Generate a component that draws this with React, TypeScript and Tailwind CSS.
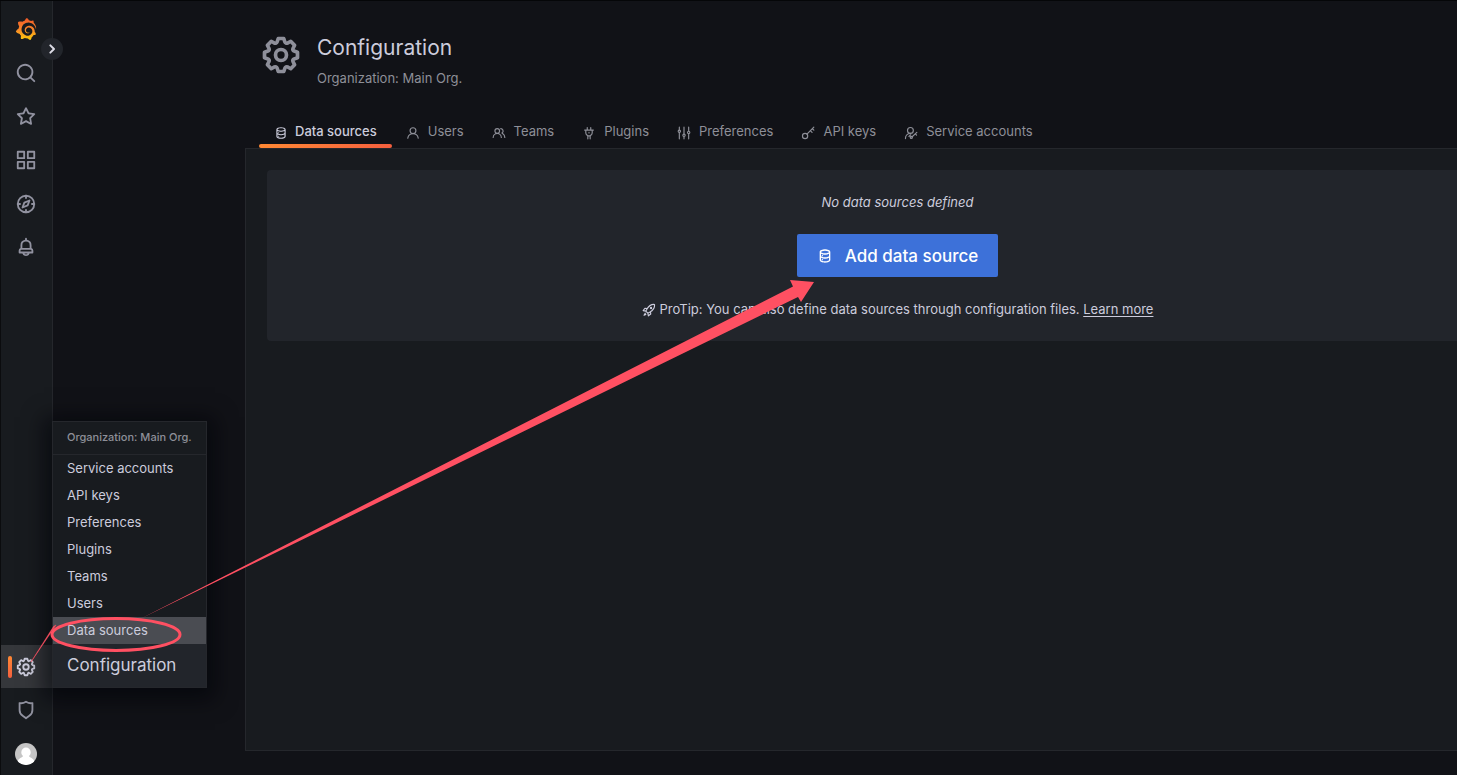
import React from "react";
import { SiGrafana } from "react-icons/si";

const PATHS = {
  search:
    "M21.71,20.29,18,16.61A9,9,0,1,0,16.61,18l3.68,3.68a1,1,0,0,0,1.42,0A1,1,0,0,0,21.71,20.29ZM11,18a7,7,0,1,1,7-7A7,7,0,0,1,11,18Z",
  star: "M22,9.67A1,1,0,0,0,21.14,9l-5.69-.83L12.9,3a1,1,0,0,0-1.8,0L8.55,8.16,2.86,9a1,1,0,0,0-.81.68,1,1,0,0,0,.25,1l4.13,4-1,5.68A1,1,0,0,0,6.9,21.44L12,18.77l5.1,2.67a.93.93,0,0,0,.46.12,1,1,0,0,0,.59-.19,1,1,0,0,0,.4-1l-1-5.68,4.13-4A1,1,0,0,0,22,9.67Zm-6.15,4a1,1,0,0,0-.29.88l.72,4.2-3.76-2a1.06,1.06,0,0,0-.94,0l-3.76,2,.72-4.2a1,1,0,0,0-.29-.88l-3-3,4.21-.61a1,1,0,0,0,.76-.55L12,5.7l1.88,3.82a1,1,0,0,0,.76.55l4.21.61Z",
  apps: "M10,13H3a1,1,0,0,0-1,1v7a1,1,0,0,0,1,1h7a1,1,0,0,0,1-1V14A1,1,0,0,0,10,13ZM9,20H4V15H9ZM21,2H14a1,1,0,0,0-1,1v7a1,1,0,0,0,1,1h7a1,1,0,0,0,1-1V3A1,1,0,0,0,21,2ZM20,9H15V4h5Zm1,4H14a1,1,0,0,0-1,1v7a1,1,0,0,0,1,1h7a1,1,0,0,0,1-1V14A1,1,0,0,0,21,13Zm-1,7H15V15h5ZM10,2H3A1,1,0,0,0,2,3v7a1,1,0,0,0,1,1h7a1,1,0,0,0,1-1V3A1,1,0,0,0,10,2ZM9,9H4V4H9Z",
  bell: "M18,13.18V10a6,6,0,0,0-5-5.91V3a1,1,0,0,0-2,0V4.09A6,6,0,0,0,6,10v3.18A3,3,0,0,0,4,16v2a1,1,0,0,0,1,1H8.14a4,4,0,0,0,7.72,0H19a1,1,0,0,0,1-1V16A3,3,0,0,0,18,13.18ZM8,10a4,4,0,0,1,8,0v3H8Zm4,10a2,2,0,0,1-1.72-1h3.44A2,2,0,0,1,12,20Zm6-3H6V16a1,1,0,0,1,1-1H17a1,1,0,0,1,1,1Z",
  cog: "M21.32,9.55l-1.89-.63.89-1.78A1,1,0,0,0,20.13,6L18,3.87a1,1,0,0,0-1.15-.19l-1.78.89-.63-1.89A1,1,0,0,0,13.5,2h-3a1,1,0,0,0-.95.68L8.92,4.57,7.14,3.68A1,1,0,0,0,6,3.87L3.87,6a1,1,0,0,0-.19,1.15l.89,1.78-1.89.63A1,1,0,0,0,2,10.5v3a1,1,0,0,0,.68.95l1.89.63-.89,1.78A1,1,0,0,0,3.87,18L6,20.13a1,1,0,0,0,1.15.19l1.78-.89.63,1.89a1,1,0,0,0,.95.68h3a1,1,0,0,0,.95-.68l.63-1.89,1.78.89A1,1,0,0,0,18,20.13L20.13,18a1,1,0,0,0,.19-1.15l-.89-1.78,1.89-.63A1,1,0,0,0,22,13.5v-3A1,1,0,0,0,21.32,9.55ZM20,12.78l-1.2.4A2,2,0,0,0,17.64,16l.57,1.14-1.1,1.1L16,17.64a2,2,0,0,0-2.79,1.16l-.4,1.2H11.22l-.4-1.2A2,2,0,0,0,8,17.64l-1.14.57-1.1-1.1L6.36,16A2,2,0,0,0,5.2,13.18L4,12.78V11.22l1.2-.4A2,2,0,0,0,6.36,8L5.79,6.89l1.1-1.1L8,6.36A2,2,0,0,0,10.82,5.2l.4-1.2h1.56l.4,1.2A2,2,0,0,0,16,6.36l1.14-.57,1.1,1.1L17.64,8a2,2,0,0,0,1.16,2.79l1.2.4ZM12,8a4,4,0,1,0,4,4A4,4,0,0,0,12,8Zm0,6a2,2,0,1,1,2-2A2,2,0,0,1,12,14Z",
  shield:
    "M19.63,3.65a1,1,0,0,0-.84-.2,8,8,0,0,1-6.22-1.27,1,1,0,0,0-1.14,0A8,8,0,0,1,5.21,3.45a1,1,0,0,0-.84.2A1,1,0,0,0,4,4.43v7.45a9,9,0,0,0,3.77,7.33l3.65,2.6a1,1,0,0,0,1.16,0l3.65-2.6A9,9,0,0,0,20,11.88V4.43A1,1,0,0,0,19.63,3.65ZM18,11.88a7,7,0,0,1-2.93,5.7L12,19.77,8.93,17.58A7,7,0,0,1,6,11.88V5.58a10,10,0,0,0,6-1.39,10,10,0,0,0,6,1.39Z",
  database:
    "M8,16.5a1,1,0,1,0,1,1A1,1,0,0,0,8,16.5ZM12,2C8,2,4,3.37,4,6V18c0,2.63,4,4,8,4s8-1.37,8-4V6C20,3.37,16,2,12,2Zm6,16c0,.71-2.28,2-6,2s-6-1.29-6-2V14.73A13.16,13.16,0,0,0,12,16a13.16,13.16,0,0,0,6-1.27Zm0-6c0,.71-2.28,2-6,2s-6-1.29-6-2V8.73A13.16,13.16,0,0,0,12,10a13.16,13.16,0,0,0,6-1.27ZM12,8C8.28,8,6,6.71,6,6s2.28-2,6-2,6,1.29,6,2S15.72,8,12,8ZM8,10.5a1,1,0,1,0,1,1A1,1,0,0,0,8,10.5Z",
  user: "M15.71,12.71a6,6,0,1,0-7.42,0,10,10,0,0,0-6.22,8.18,1,1,0,0,0,2,.22,8,8,0,0,1,15.9,0,1,1,0,0,0,1,.89h.11a1,1,0,0,0,.88-1.1A10,10,0,0,0,15.71,12.71ZM12,12a4,4,0,1,1,4-4A4,4,0,0,1,12,12Z",
  users:
    "M12.3,12.22A4.92,4.92,0,0,0,14,8.5a5,5,0,0,0-10,0,4.92,4.92,0,0,0,1.7,3.72A8,8,0,0,0,1,19.5a1,1,0,0,0,2,0,6,6,0,0,1,12,0,1,1,0,0,0,2,0A8,8,0,0,0,12.3,12.22ZM9,11.5a3,3,0,1,1,3-3A3,3,0,0,1,9,11.5Zm9.74.32A5,5,0,0,0,15,3.5a1,1,0,0,0,0,2,3,3,0,0,1,3,3,3,3,0,0,1-1.5,2.59,1,1,0,0,0-.5.84,1,1,0,0,0,.45.86l.39.26.13.07a7,7,0,0,1,4,6.38,1,1,0,0,0,2,0A9,9,0,0,0,18.74,11.82Z",
};

const STROKES: Record<string, React.ReactNode> = {
  compass: (
    <>
      <circle cx="12" cy="12" r="9" />
      <path d="M12 3v2.5M12 18.5V21M3 12h2.5M18.5 12H21M15.8 8.2l-2 5.3-5.6 2.3 2-5.3z" />
    </>
  ),
  plug: <path d="M9 2.5V7M15 2.5V7M4.5 7h15M6.5 7v5a5 5 0 0 0 3.5 4.5V22M17.5 7v5a5 5 0 0 1-3.5 4.5V22M10 17h4M12 11v1" />,
  sliders: (
    <>
      <path d="M4 2v5M4 11v11M12 2v12M12 18v4M20 2v7M20 13v9" />
      <circle cx="4" cy="9" r="2" />
      <circle cx="12" cy="16" r="2" />
      <circle cx="20" cy="11" r="2" />
    </>
  ),
  key: (
    <>
      <circle cx="7" cy="17" r="4.5" />
      <path d="M10.2 13.8 22 2M16 8l3 3M19.5 4.5 22 7" />
    </>
  ),
  account: (
    <>
      <circle cx="11" cy="7.5" r="5" />
      <path d="M2.5 21.5c0-5 3.5-9 8.5-9M8.500 18l3-3M22 11l-8 7.500M19.500 13.500l2 2" />
      <circle cx="12.500" cy="19.500" r="1.800" />
    </>
  ),
  rocket: (
    <>
      <path d="M21.500 2.500c-5-.5-9.500 1.500-13.500 8.500L6.500 14l3.500 3.500 3-1.500c7-4 9-8.500 8.500-13.500zM9 9.500 5 9l-3 4 4.500 1M14.500 15l.5 4-4 3-1-4.500M5.500 17.500l-2 3.500 3-1.500" />
      <circle cx="15.500" cy="8.500" r="1" />
    </>
  ),
};

function Icon({ name, className }: { name: string; className: string }) {
  const path = PATHS[name as keyof typeof PATHS];
  return (
    <svg viewBox="0 0 24 24" aria-hidden="true" className={className}>
      {path ? (
        <path d={path} fill="currentColor" />
      ) : (
        <g fill="none" stroke="currentColor" strokeWidth="2" strokeLinecap="round" strokeLinejoin="round">
          {STROKES[name]}
        </g>
      )}
    </svg>
  );
}

const TABS = [
  { label: "Users", icon: "user" },
  { label: "Teams", icon: "users" },
  { label: "Plugins", icon: "plug" },
  { label: "Preferences", icon: "sliders" },
  { label: "API keys", icon: "key" },
  { label: "Service accounts", icon: "account" },
];

const NAV = [
  { label: "Search", icon: "search" },
  { label: "Starred", icon: "star" },
  { label: "Dashboards", icon: "apps" },
  { label: "Explore", icon: "compass" },
  { label: "Alerting", icon: "bell" },
];

const MENU = ["Service accounts", "API keys", "Preferences", "Plugins", "Teams", "Users"];

function Sidebar() {
  return (
    <nav className="relative flex w-[53px] shrink-0 flex-col border-l border-r border-l-[#0b0c0e] border-r-[#25272c] bg-[#181b1f] pt-1.5 text-[#9192a0]">
      <div className="flex h-[262px] flex-col">
        <a href="#home" aria-label="Home" className="flex flex-1 items-center justify-center pr-0.5">
          <svg width="0" height="0" className="absolute" aria-hidden="true">
            <linearGradient id="logo" x1="0" y1="0" x2="0" y2="1">
              <stop offset="0" stopColor="#f05a28" />
              <stop offset="0.5" stopColor="#f9842a" />
              <stop offset="1" stopColor="#fbca0a" />
            </linearGradient>
          </svg>
          <SiGrafana className="size-[22px]" fill="url(#logo)" />
        </a>
        {NAV.map((item) => (
          <a key={item.label} href={"#" + item.icon} aria-label={item.label} className="flex flex-1 items-center justify-center pr-0.5">
            <Icon name={item.icon} className="size-[22px]" />
          </a>
        ))}
      </div>
      <button
        aria-label="Expand menu"
        className="absolute top-[37px] -right-[11px] z-10 flex size-[22px] items-center justify-center rounded-full bg-[#22252b] text-[#dcdce6]"
      >
        <svg viewBox="0 0 24 24" className="size-4" fill="none" stroke="currentColor" strokeWidth="3" strokeLinecap="round" strokeLinejoin="round">
          <path d="M9.500 6.500 15 12l-5.500 5.500" />
        </svg>
      </button>
      <div className="mt-auto">
        <div className="relative">
          <a href="#configuration" aria-label="Configuration" className="relative flex h-[43px] items-center justify-center bg-[#35373b] pr-0.5 text-[#ccccdc]">
            <span className="absolute left-[7px] h-[22px] w-1 rounded-sm bg-linear-to-b from-[#ff8833] to-[#f55f3e]" />
            <Icon name="cog" className="size-[22px]" />
          </a>
          <FlyoutMenu />
        </div>
        <a href="#admin" aria-label="Server admin" className="flex h-[44px] items-center justify-center pr-0.5">
          <Icon name="shield" className="size-[22px]" />
        </a>
        <a href="#profile" aria-label="Profile" className="flex h-[43px] items-center justify-center pr-0.5">
          <svg viewBox="0 0 22 22" className="size-[22px]" aria-hidden="true">
            <clipPath id="avatar">
              <circle cx="11" cy="11" r="11" />
            </clipPath>
            <g clipPath="url(#avatar)">
              <rect width="22" height="22" fill="#c5c5c5" />
              <path d="M11 4.500a4.700 4.700 0 0 1 4.700 4.800c0 1.700-.7 2.800-1.700 3.700 0 1.500 5 2 5.500 6L17 22H5l-2.500-3c.5-4 5.500-4.500 5.500-6-1-.9-1.700-2-1.700-3.700A4.700 4.700 0 0 1 11 4.500z" fill="#fff" />
            </g>
          </svg>
        </a>
      </div>
    </nav>
  );
}

function FlyoutMenu() {
  return (
    <div className="absolute bottom-0 left-[51px] z-10 w-[155px] border border-[#25272c] bg-[#181b1f] text-[13px] text-[#ccccdc] shadow-[0_4px_20px_8px_rgba(1,4,9,0.6)]">
      <div className="h-[33px] border-b border-[#25272c] pl-3.5 text-[11px] leading-[30px] font-medium whitespace-nowrap text-[#8e8f98]">
        Organization: Main Org.
      </div>
      {MENU.map((label) => (
        <a key={label} href="#menu" className="block pl-3.5 leading-[27px]">
          {label}
        </a>
      ))}
      <a href="#data-sources" className="block bg-[#4a4c52] pl-3.5 leading-[27px]">
        Data sources
      </a>
      <a href="#configuration" className="block bg-[#22252b] pl-3.5 text-[17px] leading-[43px]">
        Configuration
      </a>
    </div>
  );
}

function PageHeader() {
  return (
    <header className="ml-3.5 flex gap-3.5 pt-8">
      <Icon name="cog" className="size-[44px] text-[#8e8f9a]" />
      <div className="pt-px">
        <h1 className="text-[21px] leading-7 text-[#ccccdc]">Configuration</h1>
        <p className="mt-1.5 text-[13px] leading-5 text-[#8e8f98]">Organization: Main Org.</p>
      </div>
    </header>
  );
}

function Tabs() {
  return (
    <div role="tablist" className="ml-3.5 flex h-[33px] text-[13px] text-[#8e8f98]">
      <a href="#data-sources" role="tab" aria-selected="true" className="relative flex items-start gap-[7px] px-[15px] leading-[32px] font-medium text-[#ccccdc]">
        <Icon name="database" className="mt-[11px] size-[14px]" />
        Data sources
        <span className="absolute inset-x-0 bottom-0 h-1 rounded-sm bg-linear-to-r from-[#ff8833] to-[#f55f3e]" />
      </a>
      {TABS.map((tab) => (
        <a key={tab.label} href={"#" + tab.icon} role="tab" aria-selected="false" className="flex items-start gap-2 px-[14px] leading-[32px]">
          <Icon name={tab.icon} className="mt-[11px] size-[14px]" />
          {tab.label}
        </a>
      ))}
    </div>
  );
}

function EmptyState() {
  return (
    <section className="flex flex-col items-center rounded-l-sm bg-[#22252b] pt-[22px] pb-[22px] pl-[71px] text-[13px] leading-5 text-[#ccccdc]">
      <p className="italic">No data sources defined</p>
      <button className="mt-[22px] flex h-[43px] items-center gap-3 rounded-xs bg-[#3d71d9] px-5 text-[17px] font-medium text-white">
        <Icon name="database" className="size-4" />
        Add data source
      </button>
      <p className="mt-[22px] flex items-center">
        <Icon name="rocket" className="mt-0.5 mr-1 size-[14px]" />
        <span>
          ProTip: You can also define data sources through configuration files.{" "}
          <a href="#learn" className="underline underline-offset-2">
            Learn more
          </a>
        </span>
      </p>
    </section>
  );
}

function Annotations() {
  return (
    <svg className="pointer-events-none absolute -top-px left-0 z-20 h-[775px] w-[1457px] max-w-none" viewBox="0 0 1457 775" aria-hidden="true">
      <path d="M140 619 793 286.500 790 280 814 282 801 302 798 297z" fill="#ff5062" />
      <ellipse cx="116" cy="634.500" rx="64" ry="16" fill="none" stroke="#ff5062" strokeWidth="3" />
      <path d="M31 662 53.500 626.500 56 625z" fill="#ff5062" stroke="#ff5062" strokeWidth="0.500" />
    </svg>
  );
}

export default function App() {
  return (
    <div className="relative flex min-h-screen overflow-hidden border-t border-[#050608] bg-[#111217] font-['Inter',sans-serif]">
      <Sidebar />
      <main className="ml-[192px] flex min-w-0 flex-1 flex-col pb-6">
        <PageHeader />
        <div className="mt-[27px]">
          <Tabs />
        </div>
        <div className="flex-1 border border-r-0 border-[#25272c] bg-[#181b1f] pt-[21px] pl-[21px]">
          <EmptyState />
        </div>
      </main>
      <Annotations />
    </div>
  );
}
